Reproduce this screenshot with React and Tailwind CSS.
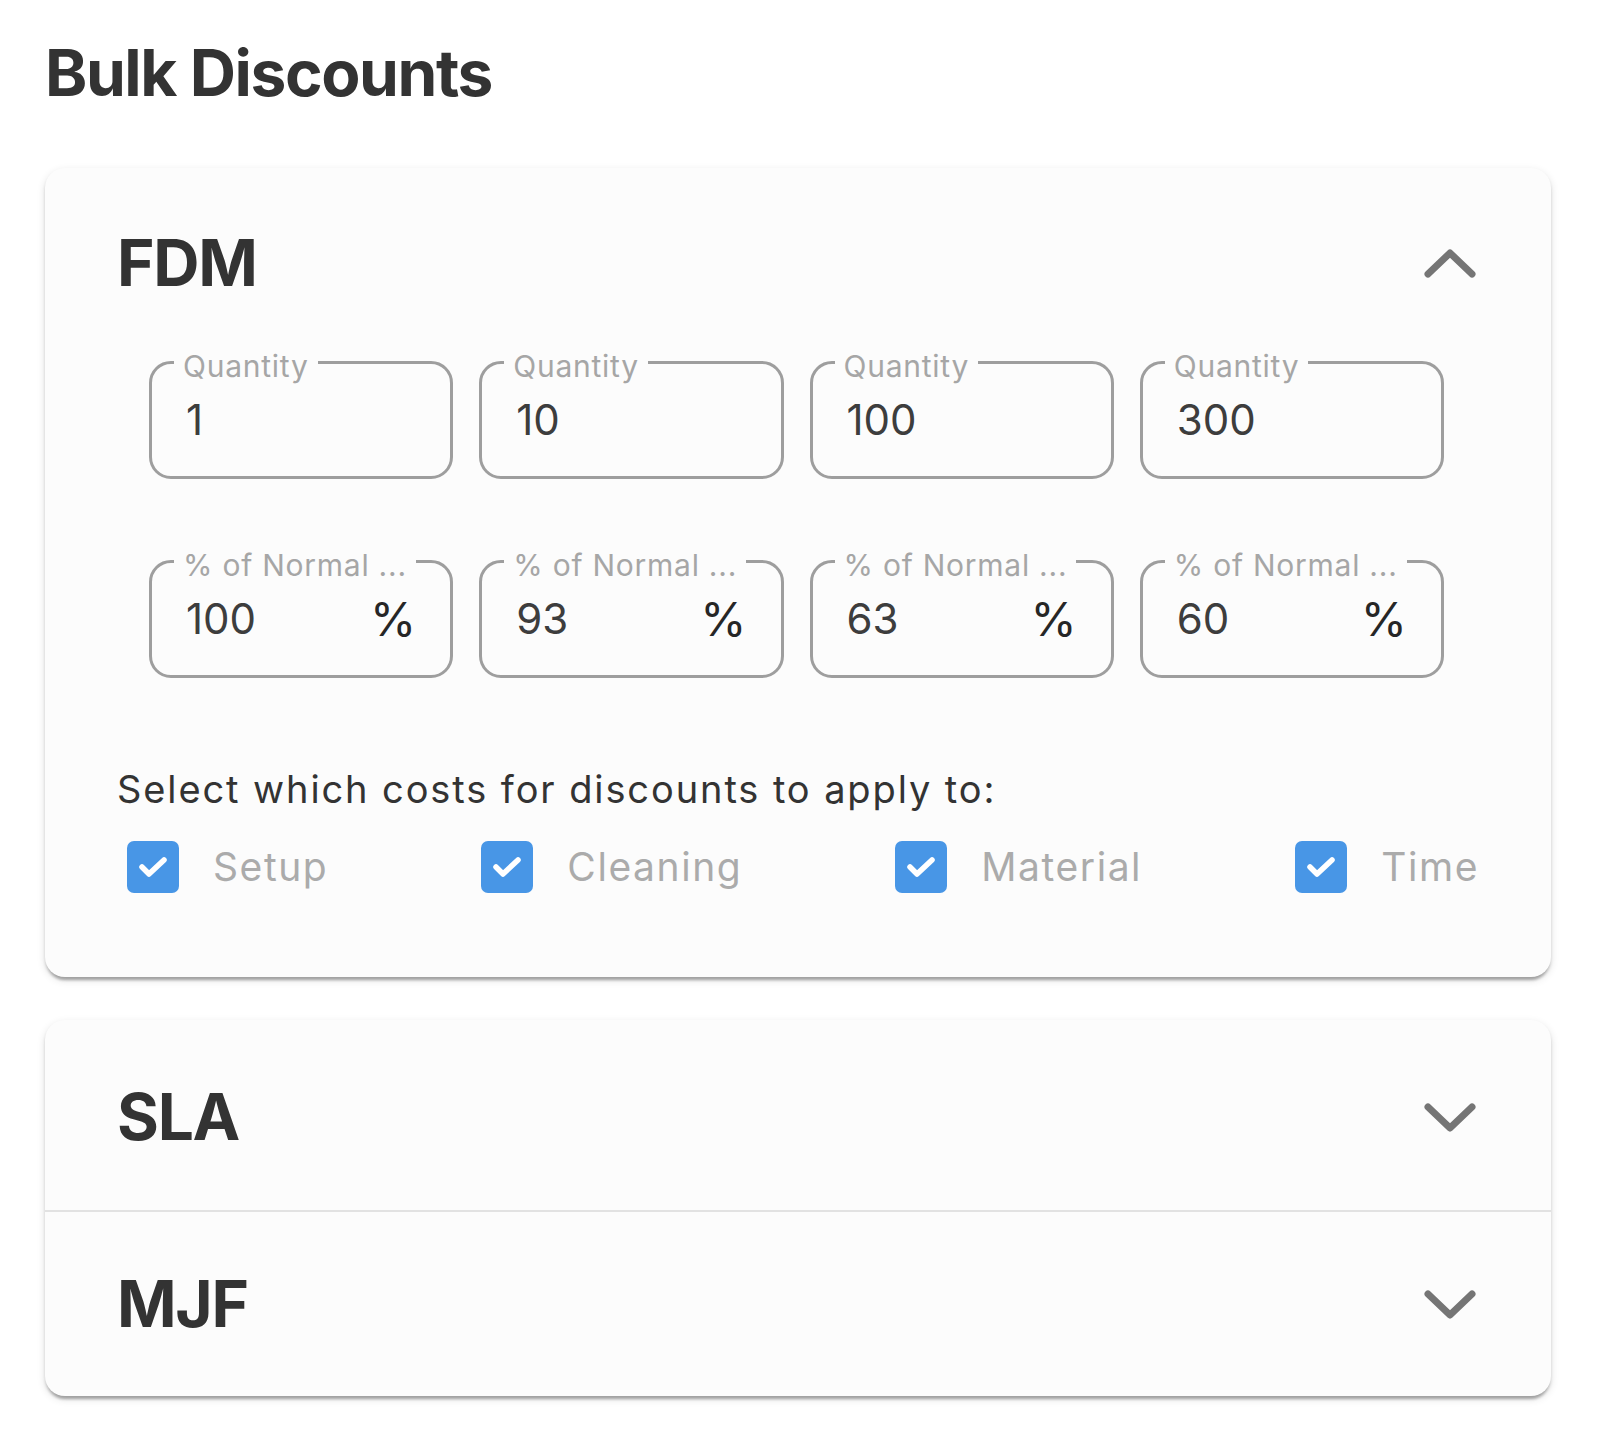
import React from "react";

function Chevron({ up }) {
  return (
    <svg width="52" height="29" viewBox="0 0 52 29" className="mr-[3px] shrink-0">
      <polyline
        points={up ? "4,25 26,4 48,25" : "4,4 26,25 48,4"}
        fill="none"
        stroke="#757575"
        strokeWidth="7"
        strokeLinecap="round"
        strokeLinejoin="round"
      />
    </svg>
  );
}

function Field({ label, value, suffix }) {
  return (
    <div className="relative h-[118px] rounded-[22px] border-[3px] border-[#9e9e9e] flex items-center pl-[34px] pr-[34px]">
      <span className="absolute left-[22px] top-[-13px] px-[9px] bg-[#fcfcfc] text-[30px] leading-[30px] tracking-[0.025em] text-[#a6a6a6] whitespace-nowrap">
        {label}
      </span>
      <span className="flex-1 text-[42px] leading-[50px] text-[#3d3d3d]">{value}</span>
      {suffix && <span className="text-[47px] leading-[50px] text-[#262626]">%</span>}
    </div>
  );
}

function Check({ label }) {
  return (
    <div className="flex items-center gap-[34px]">
      <div className="w-[52px] h-[52px] rounded-[7px] bg-[#4896e6] flex items-center justify-center">
        <svg width="52" height="52" viewBox="0 0 52 52">
          <polyline
            points="15,26 22,33 37,19"
            fill="none"
            stroke="#ffffff"
            strokeWidth="5.5"
            strokeLinecap="round"
            strokeLinejoin="round"
          />
        </svg>
      </div>
      <span className="text-[39px] leading-[46px] tracking-[0.04em] text-[#ababab]">{label}</span>
    </div>
  );
}

const shadow =
  "shadow-[0_6px_3px_-3px_rgba(0,0,0,0.2),0_3px_3px_0_rgba(0,0,0,0.14),0_3px_9px_0_rgba(0,0,0,0.12)]";

export default function App() {
  const qty = ["1", "10", "100", "300"];
  const pct = ["100", "93", "63", "60"];
  return (
    <div className="min-h-screen bg-white pl-[45px] pr-[51px] pt-[41px] pb-[45px] font-['Inter','Noto_Sans',sans-serif]">
      <h1 className="text-[64px] leading-[64px] font-bold text-[#333333] tracking-[-0.022em]">
        Bulk Discounts
      </h1>

      <div className={`mt-[63px] rounded-[20px] bg-[#fcfcfc] ${shadow} px-[72px] pt-[63px] pb-[84px]`}>
        <div className="flex items-center justify-between h-[64px]">
          <h2 className="text-[64px] leading-[64px] font-bold text-[#333333] tracking-[-0.02em]">FDM</h2>
          <Chevron up />
        </div>

        <div className="mt-[66px] pl-[32px] pr-[35px] grid grid-cols-4 gap-x-[26px] gap-y-[81px]">
          {qty.map((q, i) => (
            <Field key={"q" + i} label="Quantity" value={q} />
          ))}
          {pct.map((p, i) => (
            <Field key={"p" + i} label="% of Normal ..." value={p} suffix />
          ))}
        </div>

        <p className="mt-[88px] text-[38px] leading-[46px] tracking-[0.05em] text-[#333333]">
          Select which costs for discounts to apply to:
        </p>

        <div className="mt-[29px] pl-[10px] flex items-center justify-between">
          <Check label="Setup" />
          <Check label="Cleaning" />
          <Check label="Material" />
          <Check label="Time" />
        </div>
      </div>

      <div className={`mt-[43px] rounded-[20px] bg-[#fcfcfc] ${shadow}`}>
        <div className="px-[72px] pt-[65px] pb-[61px] flex items-center justify-between">
          <h2 className="text-[64px] leading-[64px] font-bold text-[#333333] tracking-[-0.02em]">SLA</h2>
          <Chevron />
        </div>
        <div className="h-[2px] bg-[#e2e2e2]" />
        <div className="px-[72px] py-[60px] flex items-center justify-between">
          <h2 className="text-[64px] leading-[64px] font-bold text-[#333333] tracking-[-0.02em]">MJF</h2>
          <Chevron />
        </div>
      </div>
    </div>
  );
}
